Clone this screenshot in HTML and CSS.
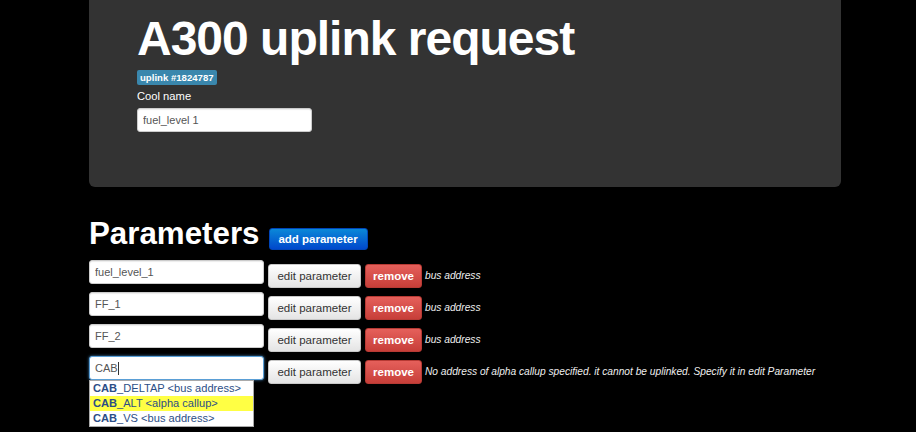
FILE: index.html
```html
<!DOCTYPE html>
<html>
<head>
<meta charset="utf-8">
<link rel="stylesheet" href="styles.css">
</head>
<body>
<div class="container">
  <div class="hero">
    <h1 class="title">A300 uplink request</h1>
    <span class="badge">uplink #1824787</span>
    <label class="field-label">Cool name</label>
    <input class="text-input" type="text" value="fuel_level 1">
  </div>

  <div class="params-head">
    <h2 class="params-title">Parameters</h2>
    <button class="btn btn-primary">add parameter</button>
  </div>

  <div class="param-row">
    <input class="text-input" type="text" value="fuel_level_1">
    <button class="btn btn-default">edit parameter</button>
    <button class="btn btn-danger">remove</button>
    <span class="note">bus address</span>
  </div>
  <div class="param-row">
    <input class="text-input" type="text" value="FF_1">
    <button class="btn btn-default">edit parameter</button>
    <button class="btn btn-danger">remove</button>
    <span class="note">bus address</span>
  </div>
  <div class="param-row">
    <input class="text-input" type="text" value="FF_2">
    <button class="btn btn-default">edit parameter</button>
    <button class="btn btn-danger">remove</button>
    <span class="note">bus address</span>
  </div>
  <div class="param-row">
    <div class="typeahead-wrap">
      <div class="text-input focused">CAB<span class="caret"></span></div>
      <ul class="typeahead">
        <li><b>CAB</b>_DELTAP &lt;bus address&gt;</li>
        <li class="active"><b>CAB</b>_ALT &lt;alpha callup&gt;</li>
        <li><b>CAB</b>_VS &lt;bus address&gt;</li>
      </ul>
    </div>
    <button class="btn btn-default">edit parameter</button>
    <button class="btn btn-danger">remove</button>
    <span class="note">No address of alpha callup specified. it cannot be uplinked. Specify it in edit Parameter</span>
  </div>
</div>
</body>
</html>
```
FILE: styles.css
```css
* { box-sizing: border-box; }
html, body { margin: 0; padding: 0; }
body {
  background: #000;
  font-family: "Liberation Sans", Arial, sans-serif;
  font-size: 11px;
  color: #fff;
  width: 916px;
  height: 432px;
  overflow: hidden;
}
.container {
  width: 752px;
  margin-left: 89px;
}
.hero {
  background: #333;
  border-radius: 0 0 6px 6px;
  height: 187px;
  padding: 15px 48px 0;
}
.title {
  margin: 0;
  font-size: 48px;
  line-height: 48px;
  letter-spacing: -1px;
  font-weight: bold;
  color: #fff;
}
.badge {
  display: inline-block;
  margin-top: 7px;
  background: #3a87ad;
  color: #fff;
  font-weight: bold;
  font-size: 9.6px;
  line-height: 13px;
  padding: 1px 3px;
  border-radius: 2px;
  vertical-align: top;
}
.field-label {
  display: block;
  margin-top: 2px;
  line-height: 18px;
  font-size: 11.2px;
  color: #fff;
}
.hero .text-input { margin-top: 3px; }
.text-input {
  display: block;
  flex-shrink: 0;
  width: 175px;
  height: 24px;
  border: 1px solid #ccc;
  border-radius: 3px;
  background: #fff;
  padding: 0 5px;
  font-family: "Liberation Sans", Arial, sans-serif;
  font-size: 11px;
  line-height: 22px;
  color: #555;
  box-shadow: inset 0 1px 1px rgba(0,0,0,0.08);
  outline: none;
}
.text-input.focused {
  border-color: #5a9fd6;
  box-shadow: 0 0 3px rgba(82,168,236,0.8);
  color: #555;
}
.caret {
  display: inline-block;
  width: 1px;
  height: 13px;
  background: #333;
  vertical-align: -3px;
}
.params-head {
  display: flex;
  align-items: flex-start;
  margin-top: 29px;
  height: 44px;
}
.params-title {
  margin: 0;
  font-size: 31.3px;
  line-height: 36px;
  font-weight: bold;
  color: #fff;
}
.params-head .btn-primary { margin-left: 9px; margin-top: 12px; }
.btn {
  flex-shrink: 0;
  font-family: "Liberation Sans", Arial, sans-serif;
  font-size: 11.5px;
  border-radius: 3px;
  cursor: pointer;
  padding: 0 7px;
}
.btn-primary {
  height: 22px;
  width: 99px;
  font-weight: bold;
  color: #fff;
  border: 1px solid #0045b8;
  background: linear-gradient(#0a88d8, #0048cc);
  padding: 0;
}
.btn-default {
  height: 24px;
  color: #333;
  border: 1px solid #c8c8c8;
  background: linear-gradient(#ffffff, #e4e4e4);
  width: 93px;
  padding: 0;
}
.btn-danger {
  height: 24px;
  color: #fff;
  font-weight: bold;
  border: 1px solid #b73a34;
  background: linear-gradient(#e5605b, #c73f39);
  width: 57px;
  padding: 0;
}
.param-row {
  display: flex;
  align-items: flex-start;
  height: 32px;
}
.param-row .btn-default { margin-left: 4px; margin-top: 4px; }
.param-row .btn-danger { margin-left: 4px; margin-top: 4px; }
.note {
  margin-left: 3px;
  margin-top: 4px;
  line-height: 24px;
  font-size: 10.2px;
  font-style: italic;
  color: #eee;
  white-space: nowrap;
}
.typeahead-wrap { position: relative; flex-shrink: 0; }
.typeahead {
  position: absolute;
  left: 0;
  top: 24px;
  width: 165px;
  margin: 0;
  padding: 0;
  list-style: none;
  background: #fff;
  border: 1px solid #aaa;
  z-index: 2;
}
.typeahead li {
  height: 15px;
  line-height: 15px;
  padding-left: 3px;
  font-size: 11.1px;
  color: #2c4e86;
  white-space: nowrap;
}
.typeahead li.active { background: #ffff44; }
```
